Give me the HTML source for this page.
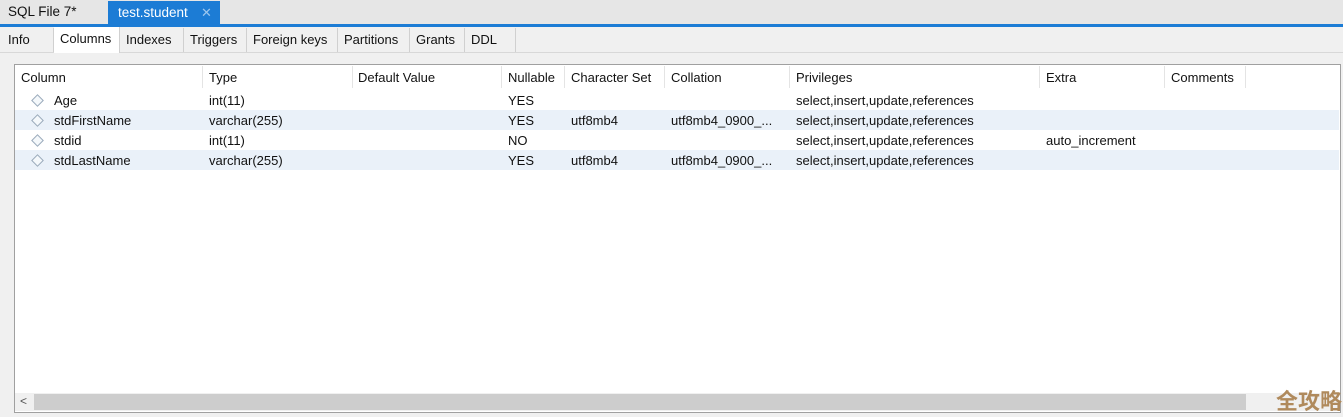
<!DOCTYPE html><html><head><style>
body{margin:0;width:1343px;height:417px;background:#f0f0f0;font-family:"Liberation Sans",sans-serif;font-size:13px;color:#111;position:relative;overflow:hidden}
.a{position:absolute}
.top{left:0;top:0;width:1343px;height:25px;background:#e6e6e6}
.blue{left:0;top:24px;width:1343px;height:3px;background:#1c7cd5}
.tabb{left:108px;top:1px;width:112px;height:25px;background:#1c7cd5;color:#fff}
.st{top:28px;height:24px;line-height:24px;border-right:1px solid #d0d0d0;padding-left:6px;box-sizing:border-box;background:#f0f0f0}
.panel{left:14px;top:64px;width:1325px;height:347px;background:#fff;border:1px solid #a0a0a0}
.h{top:68px;line-height:20px}
.sep{top:66px;width:1px;height:22px;background:#e4e4e4}
.row{left:15px;width:1324px;height:20px}
.c{line-height:20px}
.d{width:7px;height:7px;border:1px solid #9ab;transform:rotate(45deg);background:#f4f8fb}
</style></head><body>
<div class="a top"></div>
<div class="a" style="left:8px;top:4px;font-size:13.5px">SQL File 7*</div>
<div class="a tabb"><span style="position:absolute;left:10px;top:4px;font-size:13.5px">test.student</span><span style="position:absolute;left:93px;top:4px;color:#9cc6ee">✕</span></div>
<div class="a blue"></div>
<div class="a" style="left:0;top:52px;width:1343px;height:1px;background:#d8d8d8"></div>
<div class="a st" style="left:2px;width:52px">Info</div>
<div class="a st" style="left:54px;top:27px;height:26px;width:66px;background:#fff">Columns</div>
<div class="a st" style="left:120px;width:64px">Indexes</div>
<div class="a st" style="left:184px;width:63px">Triggers</div>
<div class="a st" style="left:247px;width:91px">Foreign keys</div>
<div class="a st" style="left:338px;width:72px">Partitions</div>
<div class="a st" style="left:410px;width:55px">Grants</div>
<div class="a st" style="left:465px;width:51px">DDL</div>
<div class="a panel"></div>
<div class="a h" style="left:21px">Column</div>
<div class="a h" style="left:209px">Type</div>
<div class="a h" style="left:358px">Default Value</div>
<div class="a h" style="left:508px">Nullable</div>
<div class="a h" style="left:571px">Character Set</div>
<div class="a h" style="left:671px">Collation</div>
<div class="a h" style="left:796px">Privileges</div>
<div class="a h" style="left:1046px">Extra</div>
<div class="a h" style="left:1171px">Comments</div>
<div class="a sep" style="left:202px"></div><div class="a sep" style="left:352px"></div><div class="a sep" style="left:501px"></div><div class="a sep" style="left:564px"></div><div class="a sep" style="left:664px"></div><div class="a sep" style="left:789px"></div><div class="a sep" style="left:1039px"></div><div class="a sep" style="left:1164px"></div><div class="a sep" style="left:1245px"></div>
<div class="a row" style="top:110px;background:#eaf1f9"></div>
<div class="a row" style="top:150px;background:#eaf1f9"></div>
<div class="a d" style="left:33px;top:96px"></div><div class="a d" style="left:33px;top:116px"></div><div class="a d" style="left:33px;top:136px"></div><div class="a d" style="left:33px;top:156px"></div>
<div class="a c" style="left:54px;top:91px">Age<br>stdFirstName<br>stdid<br>stdLastName</div>
<div class="a c" style="left:209px;top:91px">int(11)<br>varchar(255)<br>int(11)<br>varchar(255)</div>
<div class="a c" style="left:508px;top:91px">YES<br>YES<br>NO<br>YES</div>
<div class="a c" style="left:571px;top:91px">&nbsp;<br>utf8mb4<br>&nbsp;<br>utf8mb4</div>
<div class="a c" style="left:671px;top:91px">&nbsp;<br>utf8mb4_0900_...<br>&nbsp;<br>utf8mb4_0900_...</div>
<div class="a c" style="left:796px;top:91px">select,insert,update,references<br>select,insert,update,references<br>select,insert,update,references<br>select,insert,update,references</div>
<div class="a c" style="left:1046px;top:131px">auto_increment</div>
<div class="a" style="left:15px;top:393px;width:1324px;height:18px;background:#f0f0f0"></div>
<div class="a" style="left:34px;top:394px;width:1212px;height:16px;background:#cdcdcd"></div>
<div class="a" style="left:20px;top:394px;color:#555;font-size:12px">&lt;</div>
<div class="a" style="left:1276px;top:384px;font-size:22px;font-weight:bold;color:#b08a5c;font-family:'Noto Sans CJK SC',sans-serif">全攻略</div>
</body></html>
